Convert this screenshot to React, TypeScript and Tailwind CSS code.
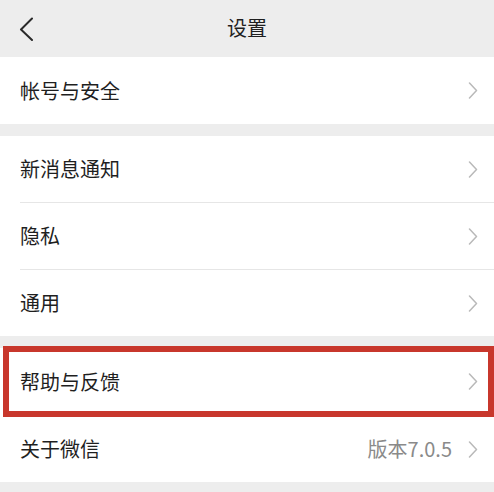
const font = { fontFamily: '"Noto Sans CJK SC", "Noto Sans", sans-serif' }

function ChevronRight() {
    return (
        <svg width="10" height="17" viewBox="0 0 10 17" fill="none" className="shrink-0">
            <polyline points="1.5,1 8.5,8.5 1.5,16" stroke="#b9b9b9" strokeWidth="1.5" strokeLinecap="round" strokeLinejoin="round" />
        </svg>
    )
}

function Row({ label, value, height = 'h-[66px]' }: { label: string; value?: string; height?: string }) {
    return (
        <div className={`${height} flex items-center justify-between pl-5 pr-[16px] bg-white`}>
            <span className="text-[20px] text-[#1f1f1f] leading-none">{label}</span>
            <div className="flex items-center gap-[16px]">
                {value && <span className="text-[20px] text-[#8a8a8a] leading-none">{value}</span>}
                <ChevronRight />
            </div>
        </div>
    )
}

function Divider() {
    return (
        <div className="bg-white pl-5">
            <div className="h-px bg-[#e6e6e6]" />
        </div>
    )
}

export default function App() {
    return (
        <div className="w-[494px] h-[492px] overflow-hidden bg-[#ededed]" style={font}>
            {/* header */}
            <div className="h-[57px] grid grid-cols-[60px_1fr_60px] items-center bg-[#ededed]">
                <div className="pl-[19px] flex items-center">
                    <svg width="15" height="24" viewBox="0 0 15 24" fill="none">
                        <polyline points="13,1.5 2,12.5 13,23" stroke="#2a2a2a" strokeWidth="2" strokeLinecap="round" strokeLinejoin="round" />
                    </svg>
                </div>
                <div className="text-center text-[20px] text-[#1f1f1f] leading-none pb-[2px]">设置</div>
                <div />
            </div>

            <Row label="帐号与安全" height="h-[67px]" />

            <div className="h-3" />

            <Row label="新消息通知" />
            <Divider />
            <Row label="隐私" />
            <Divider />
            <Row label="通用" />

            <div className="h-3" />

            <div className="relative">
                <Row label="帮助与反馈" height="h-[67px]" />
                <div className="absolute -top-[2px] -bottom-[2px] left-[3px] right-0 border-[6px] border-[#c8372c] pointer-events-none" />
            </div>
            <Divider />
            <Row label="关于微信" value="版本7.0.5" />
        </div>
    )
}
